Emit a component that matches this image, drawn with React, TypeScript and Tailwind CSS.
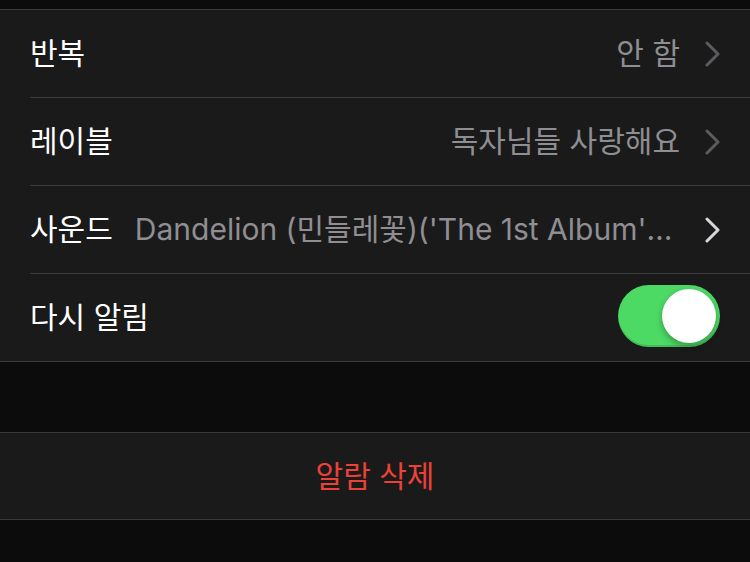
const font = { fontFamily: 'Inter, "Noto Sans CJK KR", sans-serif' }

const Chevron = ({ bright }: { bright?: boolean }) => (
  <svg width="15" height="26" viewBox="0 0 15 26" className="ml-[25px] shrink-0" fill="none">
    <path
      d="M2 2 L13 13 L2 24"
      stroke={bright ? "#d8d8dc" : "#5c5c60"}
      strokeWidth="3"
      strokeLinecap="round"
      strokeLinejoin="round"
    />
  </svg>
)

const Row = ({ label, value, last, bright }: { label: string; value?: string; last?: boolean; bright?: boolean }) => (
  <div className="pl-[30px]">
    <div className={`flex items-center h-[88px] pr-[30px] ${last ? "" : "border-b border-[#3a3a3c]"}`}>
      <span className="text-white text-[30px] shrink-0">{label}</span>
      <span className="flex-1 min-w-0 ml-[22px] text-right text-[30px] text-[#8e8e93] truncate">{value}</span>
      <Chevron bright={bright} />
    </div>
  </div>
)

const Toggle = () => (
  <div className="w-[102px] h-[62px] rounded-full bg-[#4cd964] relative -top-[2px] shadow-[inset_0_-2px_0_rgba(0,0,0,0.12)]">
    <div className="absolute right-[4px] top-[4px] size-[54px] rounded-full bg-white shadow-[0_3px_6px_rgba(0,0,0,0.3)]" />
  </div>
)

export default function App() {
  return (
    <div className="w-[750px] h-[562px] bg-[#0c0c0c] overflow-hidden" style={font}>
      <div className="h-[9px]" />
      <div className="bg-[#1a1a1a] border-y border-[#3a3a3c]">
        <Row label="반복" value="안 함" />
        <Row label="레이블" value="독자님들 사랑해요" />
        <Row label="사운드" value="Dandelion (민들레꽃)('The 1st Album'(Live))" bright />
        <div className="pl-[30px]">
          <div className="flex items-center justify-between h-[87px] pr-[30px]">
            <span className="text-white text-[30px]">다시 알림</span>
            <Toggle />
          </div>
        </div>
      </div>
      <div className="h-[70px]" />
      <div className="bg-[#1a1a1a] border-y border-[#3a3a3c] h-[88px] flex items-center justify-center">
        <span className="text-[#eb4137] text-[30px]">알람 삭제</span>
      </div>
    </div>
  )
}
